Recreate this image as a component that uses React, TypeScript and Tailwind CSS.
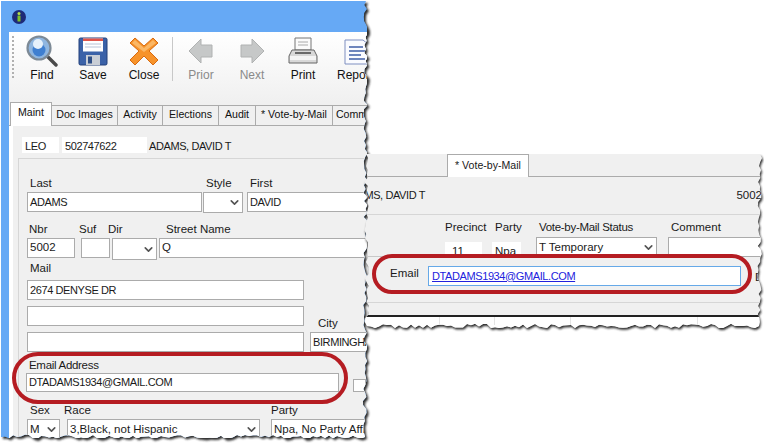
import type { ReactNode } from "react";
import { ChevronDown } from "lucide-react";

/* ================= TORN EDGES ================= */

type Pt = [number, number];

const jag = (from: Pt, to: Pt, seed: number, amp = 2.2): Pt[] => {
  const pts: Pt[] = [];
  const len = Math.hypot(to[0] - from[0], to[1] - from[1]);
  const n = Math.floor(len / 4);
  const nx = (to[1] - from[1]) / len;
  const ny = (to[0] - from[0]) / len;
  let s = seed;
  for (let i = 1; i < n; i++) {
    s = (s * 16807) % 2147483647;
    const off = ((s % 1000) / 500 - 1) * amp;
    const t = i / n;
    pts.push([
      from[0] + (to[0] - from[0]) * t + nx * off,
      from[1] + (to[1] - from[1]) * t + ny * off,
    ]);
  }
  return pts;
};

// polygons are in page coordinates
const windowOne: Pt[] = [
  [1, 1],
  [366, 1],
  ...jag([366, 1], [365, 437], 77),
  [365, 437],
  ...jag([365, 437], [1, 437], 191),
  [1, 437],
];

const windowTwo: Pt[] = [
  [366, 154],
  [760, 154],
  ...jag([760, 154], [759, 326], 311),
  [759, 326],
  ...jag([759, 326], [367, 326], 523),
  [367, 326],
  ...jag([367, 326], [366, 154], 907),
];

const toClip = (pts: Pt[], dx: number, dy: number) =>
  `polygon(${pts.map(([x, y]) => `${x - dx}px ${y - dy}px`).join(",")})`;

const toSvg = (pts: Pt[]) => pts.map(([x, y]) => `${x},${y}`).join(" ");

/* ================= TOOLBAR ICONS ================= */

const FindIcon = () => (
  <svg width="32" height="32" viewBox="0 0 32 32">
    <path d="M21 21 L30 30" stroke="#4a4a4a" strokeWidth="3.4" strokeLinecap="round" />
    <circle cx="13" cy="13" r="11.5" fill="#8fb6e0" stroke="#7d8a96" strokeWidth="2.2" />
    <circle cx="13" cy="15" r="6.5" fill="#3f7fd0" />
    <circle cx="12" cy="9" r="5" fill="#e6f1fb" />
  </svg>
);

const SaveIcon = () => (
  <svg width="32" height="32" viewBox="0 0 32 32">
    <rect x="2" y="3" width="28" height="27" rx="1.5" fill="#3b62a8" stroke="#24417a" />
    <rect x="6" y="3.5" width="20" height="13" fill="#ffffff" />
    <rect x="6" y="3.5" width="20" height="2.5" fill="#e0554a" />
    <path d="M8 9H24M8 12H24" stroke="#b8c4d8" />
    <rect x="9" y="20" width="14" height="10" fill="#c9ced6" />
    <rect x="11" y="21.5" width="4" height="7" fill="#2f4f86" />
  </svg>
);

const CloseIcon = () => (
  <svg width="32" height="32" viewBox="0 0 32 32">
    <path
      d="M7 3 L16 11 L25 3 L30 8 L21 16 L30 25 L25 30 L16 21 L7 30 L2 25 L11 16 L2 8 Z"
      fill="#f7932a"
      stroke="#d86a10"
      strokeLinejoin="round"
    />
    <path d="M7 5 L16 13 L25 5 L28 8 L16 17 L4 8 Z" fill="#fbb765" />
  </svg>
);

const ArrowIcon = ({ flip }: { flip?: boolean }) => (
  <svg width="32" height="32" viewBox="0 0 32 32">
    <path
      d={flip ? "M28 16 L16 4 V10 H5 V22 H16 V28 Z" : "M4 16 L16 4 V10 H27 V22 H16 V28 Z"}
      fill="#c6c8c8"
      stroke="#b0b2b2"
      strokeLinejoin="round"
    />
  </svg>
);

const PrintIcon = () => (
  <svg width="32" height="32" viewBox="0 0 32 32">
    <path d="M8 3H24V15H8Z" fill="#fbfbfb" stroke="#777" />
    <path d="M11 7H21M11 10H21" stroke="#aaa" />
    <path d="M5 15H27L30 21V28H2V21Z" fill="#d8d8d8" stroke="#666" />
    <path d="M3 21H29V25H3Z" fill="#f4f4f4" />
    <path d="M8 18H24" stroke="#444" strokeWidth="1.5" />
  </svg>
);

const ReportIcon = () => (
  <svg width="32" height="32" viewBox="0 0 32 32">
    <path d="M6 5H24L30 10V29H6Z" fill="#fafbff" stroke="#7f8fc0" />
    <path d="M10 12H24M10 16H26M10 20H22M10 24H26" stroke="#3f5fa8" strokeWidth="1.6" />
  </svg>
);

/* ================= SMALL CONTROLS ================= */

const Box = ({ className, children }: { className: string; children?: ReactNode }) => (
  <div className={`flex items-center overflow-hidden whitespace-nowrap border border-[#ababab] bg-white px-[2px] text-[11.5px] text-[#1a1a1a] ${className}`}>
    {children}
  </div>
);

const Select = ({ className, children }: { className: string; children?: ReactNode }) => (
  <div className={`flex items-center justify-between overflow-hidden whitespace-nowrap border border-[#ababab] bg-white pl-[2px] pr-[1px] text-[11.5px] text-[#1a1a1a] ${className}`}>
    <span>{children}</span>
    <ChevronDown size={13} strokeWidth={3} className="shrink-0 text-[#555555]" />
  </div>
);

const Label = ({ className = "", children }: { className?: string; children: ReactNode }) => (
  <div className={`h-[14px] whitespace-nowrap text-[11.5px] leading-[14px] text-[#1a1a1a] ${className}`}>
    {children}
  </div>
);

// all-caps values run narrower in the original font
const Caps = ({ children }: { children: ReactNode }) => (
  <span className="text-[11px] tracking-[-0.4px]">{children}</span>
);

/* ================= DATA ================= */

const TOOLS = [
  { label: "Find", width: "w-[50px]", icon: <FindIcon /> },
  { label: "Save", width: "w-[52px]", icon: <SaveIcon /> },
  { label: "Close", width: "w-[50px]", icon: <CloseIcon /> },
  { label: "sep", width: "w-[7px]", icon: null },
  { label: "Prior", width: "w-[50px]", icon: <ArrowIcon />, off: true },
  { label: "Next", width: "w-[52px]", icon: <ArrowIcon flip />, off: true },
  { label: "Print", width: "w-[50px]", icon: <PrintIcon /> },
  { label: "Report", width: "w-[54px]", icon: <ReportIcon /> },
];

const TABS = [
  { label: "Doc Images", width: "w-[66px]" },
  { label: "Activity", width: "w-[45px]" },
  { label: "Elections", width: "w-[56px]" },
  { label: "Audit", width: "w-[37px]" },
  { label: "* Vote-by-Mail", width: "w-[77px]" },
  { label: "Comm", width: "w-[38px]" },
];

/* ================= COMPONENT ================= */

const App = () => {
  return (
    <div className="relative h-[448px] w-[764px] overflow-hidden bg-white font-['Liberation_Sans',Arial,sans-serif]">
      {/* ================= SHADOWS ================= */}

      <svg className="absolute left-0 top-0" width="764" height="448">
        <defs>
          <filter id="tear" x="-5%" y="-5%" width="110%" height="110%">
            <feGaussianBlur stdDeviation="1.3" />
          </filter>
        </defs>
        <polygon points={toSvg(windowOne)} fill="#2c2c2c" filter="url(#tear)" transform="translate(2 2)" />
      </svg>

      {/* ================= MAIN WINDOW ================= */}

      <div
        className="absolute left-[1px] top-[1px] flex h-[437px] w-[366px] flex-col overflow-hidden bg-[#66a9f5]"
        style={{ clipPath: toClip(windowOne, 1, 1) }}
      >
        <div className="flex h-[31px] shrink-0 items-center pl-[11px]">
          <svg width="14" height="14" viewBox="0 0 14 14">
            <circle cx="7" cy="7" r="7" fill="#1e2a78" />
            <circle cx="7" cy="3.4" r="1.5" fill="#b5e04a" />
            <rect x="5.5" y="5.4" width="3" height="6" rx="0.5" fill="#7fc02a" />
          </svg>
        </div>

        <div className="ml-[8px] flex min-h-0 w-[400px] flex-1 flex-col bg-[#f0f0f0]">
          {/* TOOLBAR */}

          <div className="flex h-[70px] shrink-0 bg-gradient-to-b from-white to-[#f0f0f0]">
            <div className="ml-[3px] mt-[4px] h-[42px] w-[2px] border-l-2 border-dotted border-[#b0b0b0]" />
            <div className="ml-[3px] flex">
              {TOOLS.map((tool) =>
                tool.icon ? (
                  <div key={tool.label} className={`flex flex-col items-center pt-[3px] ${tool.width}`}>
                    <div className="h-[33px] w-[32px]">{tool.icon}</div>
                    <div className={`text-[12px] leading-[14px] ${tool.off ? "text-[#8a8a8a]" : "text-[#111111]"}`}>
                      {tool.label}
                    </div>
                  </div>
                ) : (
                  <div key={tool.label} className={`flex justify-center pt-[5px] ${tool.width}`}>
                    <div className="h-[44px] w-px bg-[#c8c8c8]" />
                  </div>
                )
              )}
            </div>
          </div>

          {/* TABS */}

          <div className="flex h-[24px] shrink-0 items-end border-b border-[#ababab] pl-px">
            <div className="-mb-px h-[24px] w-[42px] border border-b-0 border-[#ababab] bg-white pt-[2px] text-center text-[10.6px] leading-[14px] text-[#111111]">
              Maint
            </div>
            {TABS.map((tab) => (
              <div
                key={tab.label}
                className={`h-[20px] whitespace-nowrap border-r border-t border-[#ababab] bg-[#f0f0f0] pt-[1px] text-center text-[10.6px] leading-[14px] text-[#111111] ${tab.width}`}
              >
                {tab.label}
              </div>
            ))}
          </div>

          {/* PANEL */}

          <div className="flex min-h-0 flex-1 flex-col border-l-[4px] border-white pl-[5px]">
            <div className="flex h-[32px] shrink-0 items-start pl-[4px] pt-[11px] text-[#1a1a1a]">
              <div className="h-[16px] w-[37px] bg-white pl-[3px] leading-[16px]"><Caps>LEO</Caps></div>
              <div className="ml-[3px] h-[16px] w-[85px] bg-white pl-[3px] leading-[16px]"><Caps>502747622</Caps></div>
              <div className="ml-[2px] leading-[16px]"><Caps>ADAMS, DAVID T</Caps></div>
            </div>

            <div className="min-h-0 flex-1 border-l border-t border-[#d6d6d6] pl-[8px]">
              {/* NAME */}

              <div className="mt-[17px] flex h-[37px]">
                <div className="w-[175px]">
                  <Label className="mb-[2px] ml-[3px]">Last</Label>
                  <Box className="h-[20px] w-[175px]"><Caps>ADAMS</Caps></Box>
                </div>
                <div className="ml-[1px] w-[40px]">
                  <Label className="mb-[2px] ml-[3px]">Style</Label>
                  <Select className="h-[21px] w-[40px]" />
                </div>
                <div className="ml-[4px] w-[200px]">
                  <Label className="mb-[2px] ml-[3px]">First</Label>
                  <Box className="h-[20px] w-[200px]"><Caps>DAVID</Caps></Box>
                </div>
              </div>

              {/* ADDRESS */}

              <div className="mt-[9px] flex h-[38px]">
                <div className="w-[48px]">
                  <Label className="mb-[2px] ml-[2px]">Nbr</Label>
                  <Box className="h-[20px] w-[48px]">5002</Box>
                </div>
                <div className="ml-[6px] w-[29px]">
                  <Label className="-ml-[2px] mb-[2px]">Suf</Label>
                  <Box className="h-[20px] w-[29px]" />
                </div>
                <div className="ml-[2px] w-[45px]">
                  <Label className="-ml-[4px] mb-[2px]">Dir</Label>
                  <Select className="h-[22px] w-[45px]" />
                </div>
                <div className="ml-[2px] w-[220px]">
                  <Label className="mb-[2px] ml-[7px]">Street Name</Label>
                  <Box className="h-[20px] w-[220px]">Q</Box>
                </div>
              </div>

              {/* MAIL */}

              <div className="mt-px flex">
                <div className="w-[277px]">
                  <Label className="mb-[5px] ml-[3px]">Mail</Label>
                  <Box className="h-[20px] w-[277px]"><Caps>2674 DENYSE DR</Caps></Box>
                  <Box className="mt-[6px] h-[20px] w-[277px]" />
                  <Box className="mt-[6px] h-[20px] w-[277px]" />
                </div>
                <div className="ml-[6px] flex w-[100px] flex-col justify-end">
                  <Label className="mb-[2px] ml-[8px]">City</Label>
                  <Box className="h-[20px] w-[100px]"><Caps>BIRMINGHAM</Caps></Box>
                </div>
              </div>

              {/* EMAIL */}

              <div className="mt-[6px]">
                <Label className="mb-px ml-[2px] tracking-[-0.3px]">Email Address</Label>
                <div className="-ml-px flex items-center">
                  <Box className="h-[19px] w-[313px]"><Caps>DTADAMS1934@GMAIL.COM</Caps></Box>
                  <div className="ml-[14px] mt-[5px] h-[13px] w-[13px] border border-[#ababab] bg-white" />
                </div>
              </div>

              {/* DEMOGRAPHICS */}

              <div className="mt-[11px] flex">
                <div className="w-[33px]">
                  <Label className="mb-[2px] ml-[3px]">Sex</Label>
                  <Select className="h-[21px] w-[33px]">M</Select>
                </div>
                <div className="ml-[7px] w-[193px]">
                  <Label className="-ml-[3px] mb-[2px]">Race</Label>
                  <Select className="h-[21px] w-[193px]">3,Black, not Hispanic</Select>
                </div>
                <div className="ml-[11px] w-[120px]">
                  <Label className="mb-[2px]">Party</Label>
                  <Box className="h-[21px] w-[120px]">Npa, No Party Affiliation</Box>
                </div>
              </div>
            </div>
          </div>
        </div>
      </div>

      <div className="absolute left-[12px] top-[352px] h-[52px] w-[336px] rounded-full border-[4px] border-[#b51c22]" />

      {/* ================= VOTE-BY-MAIL WINDOW ================= */}

      <svg className="absolute left-0 top-0" width="764" height="448">
        <polygon points={toSvg(windowTwo)} fill="#2c2c2c" filter="url(#tear)" transform="translate(1 2)" />
      </svg>

      <div
        className="absolute left-[360px] top-[154px] flex h-[176px] w-[404px] flex-col overflow-hidden bg-[#f0f0f0] text-[11.5px] text-[#1a1a1a]"
        style={{ clipPath: toClip(windowTwo, 360, 154) }}
      >
        <div className="flex h-[23px] shrink-0 items-end border-b border-[#ababab] pl-[87px]">
          <div className="-mb-px h-[23px] w-[82px] whitespace-nowrap border border-b-0 border-[#ababab] bg-white pt-[3px] text-center text-[10.6px] leading-[14px]">
            * Vote-by-Mail
          </div>
        </div>

        <div className="flex h-[38px] shrink-0 items-center justify-between border-b border-[#d6d6d6]">
          <div className="-ml-[17px] whitespace-nowrap"><Caps>ADAMS, DAVID T</Caps></div>
          <div className="-mr-[28px] whitespace-nowrap">5002 Q ST</div>
        </div>

        <div className="flex h-[42px] shrink-0 border-b border-[#c8c8c8] pl-[85px] pt-[5px]">
          <div className="w-[37px]">
            <Label className="mb-[8px]">Precinct</Label>
            <div className="h-[15px] w-[37px] bg-white pl-[7px] leading-[18px]">11</div>
          </div>
          <div className="ml-[10px] w-[29px]">
            <Label className="mb-[8px] ml-[3px]">Party</Label>
            <div className="h-[15px] w-[29px] bg-white pl-[3px] leading-[18px]">Npa</div>
          </div>
          <div className="ml-[15px] w-[121px]">
            <Label className="mb-[3px] ml-[3px] tracking-[-0.3px]">Vote-by-Mail Status</Label>
            <Select className="h-[21px] w-[121px]">T Temporary</Select>
          </div>
          <div className="ml-[11px] w-[100px]">
            <Label className="mb-[3px] ml-[3px]">Comment</Label>
            <Box className="h-[20px] w-[100px]" />
          </div>
        </div>

        <div className="flex h-[46px] shrink-0 border-b border-[#d6d6d6] pl-[30px] pt-[9px]">
          <div className="-mt-px w-[38px]">Email</div>
          <div className="flex h-[20px] w-[313px] items-center border border-[#66a9e8] bg-white px-[3px] text-[#2222dd] underline">
            <Caps>DTADAMS1934@GMAIL.COM</Caps>
          </div>
          <div className="ml-[14px] mt-[3px]">D</div>
        </div>

        <div className="mt-[12px] h-[2px] shrink-0 bg-[#222222]" />
        <div className="flex flex-1 bg-white pl-[20px]">
          <div className="h-[8px] w-[60px] border-r border-[#e4e4e4]" />
          <div className="h-[8px] w-[55px] border-r border-[#e4e4e4]" />
          <div className="h-[8px] w-[76px] border-r border-[#e4e4e4]" />
          <div className="h-[8px] w-[127px] border-r border-[#e4e4e4]" />
        </div>
      </div>

      <div className="absolute left-[372px] top-[254px] h-[40px] w-[380px] rounded-full border-[4px] border-[#b51c22]" />
    </div>
  );
};

export default App;
